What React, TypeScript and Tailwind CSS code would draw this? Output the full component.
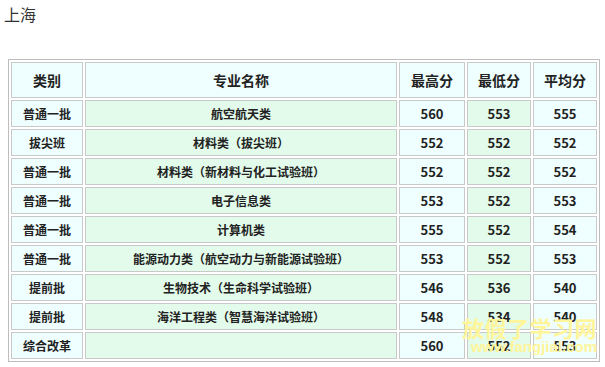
const rows: [string, string, string, string, string][] = [
  ["普通一批", "航空航天类", "560", "553", "555"],
  ["拔尖班", "材料类（拔尖班）", "552", "552", "552"],
  ["普通一批", "材料类（新材料与化工试验班）", "552", "552", "552"],
  ["普通一批", "电子信息类", "553", "552", "553"],
  ["普通一批", "计算机类", "555", "552", "554"],
  ["普通一批", "能源动力类（航空动力与新能源试验班）", "553", "552", "553"],
  ["提前批", "生物技术（生命科学试验班）", "546", "536", "540"],
  ["提前批", "海洋工程类（智慧海洋试验班）", "548", "534", "540"],
  ["综合改革", "", "560", "552", "553"],
];

const cyan = "bg-[#effefe]";
const green = "bg-[#e2fbea]";
const cell = "border border-[#c9c9c9] text-center align-middle p-0";

export default function App() {
  return (
    <div className="relative h-[367px] w-[605px] overflow-hidden bg-white font-['Noto_Sans_CJK_SC','Noto_Sans',sans-serif] text-[#222]">
      <p className="pl-[4px] pt-[4px] text-[16px] leading-[20px] text-[#333]">上海</p>

      <table className="ml-[8px] mt-[35px] w-[592px] table-fixed border-separate border-spacing-[2px] border border-[#bdbdbd]">
        <thead>
          <tr className="h-[36px] text-[14px] font-bold">
            <th className={`${cell} ${cyan} w-[72px]`}>类别</th>
            <th className={`${cell} ${cyan} w-[312px]`}>专业名称</th>
            <th className={`${cell} ${cyan} w-[66px]`}>最高分</th>
            <th className={`${cell} ${cyan} w-[64px]`}>最低分</th>
            <th className={`${cell} ${cyan} w-[64px]`}>平均分</th>
          </tr>
        </thead>
        <tbody>
          {rows.map((r, i) => (
            <tr key={i} className="h-[27px] font-bold">
              <td className={`${cell} ${cyan} text-[12px]`}>{r[0]}</td>
              <td className={`${cell} ${green} text-[12px]`}>{r[1]}</td>
              <td className={`${cell} ${cyan} text-[13px]`}>{r[2]}</td>
              <td className={`${cell} ${green} text-[13px]`}>{r[3]}</td>
              <td className={`${cell} ${cyan} text-[13px]`}>{r[4]}</td>
            </tr>
          ))}
        </tbody>
      </table>

      <div className="pointer-events-none absolute left-[462px] top-[314px] flex flex-col items-end font-bold text-[#fff59a]">
        <span className="text-[22px] leading-[26px] tracking-[0.5px]">放假了学习网</span>
        <span className="-mt-[1px] font-['Liberation_Sans',sans-serif] text-[15px] leading-[16px]">www.fangjial.com</span>
      </div>
    </div>
  );
}
